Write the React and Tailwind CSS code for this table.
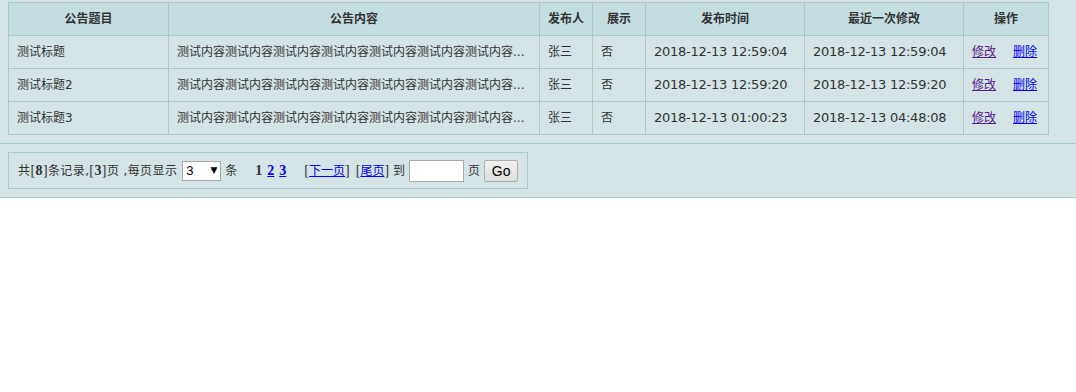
import React from "react";

const rows = [
  { title: "测试标题", pub: "2018-12-13 12:59:04", mod: "2018-12-13 12:59:04" },
  { title: "测试标题2", pub: "2018-12-13 12:59:20", mod: "2018-12-13 12:59:20" },
  { title: "测试标题3", pub: "2018-12-13 01:00:23", mod: "2018-12-13 04:48:08" },
];

const content = "测试内容".repeat(7) + "...";

const cols = [
  { name: "公告题目", w: "w-[160px]" },
  { name: "公告内容", w: "w-[371px]" },
  { name: "发布人", w: "w-[53px]" },
  { name: "展示", w: "w-[53px]" },
  { name: "发布时间", w: "w-[159px]" },
  { name: "最近一次修改", w: "w-[159px]" },
  { name: "操作", w: "w-[85px]" },
];

const td = "border border-[#a9c9cb] h-[33px] pl-[8px] pr-[4px] whitespace-nowrap overflow-hidden";
const serif = { fontFamily: "'Liberation Serif', serif" };

export default function App() {
  return (
    <div
      className="w-full min-h-[392px] bg-white text-[12px] text-[#333]"
      style={{ fontFamily: "'DejaVu Sans', 'Noto Sans CJK SC', sans-serif" }}
    >
      <div className="bg-[#d3e3e6]">
        {/* list */}
        <div className="pt-[2px] pl-[8px] pb-[8px]">
          <table className="table-fixed border-collapse w-[1040px]">
            <thead>
              <tr className="bg-[#c4dde1]">
                {cols.map((c) => (
                  <th key={c.name} className={`${c.w} border border-[#a9c9cb] h-[33px] font-bold text-center`}>
                    {c.name}
                  </th>
                ))}
              </tr>
            </thead>
            <tbody>
              {rows.map((r) => (
                <tr key={r.title}>
                  <td className={td}>{r.title}</td>
                  <td className={td}>{content}</td>
                  <td className={td}>张三</td>
                  <td className={td}>否</td>
                  <td className={`${td} text-[13px] tracking-[-0.25px]`}>{r.pub}</td>
                  <td className={`${td} text-[13px] tracking-[-0.25px]`}>{r.mod}</td>
                  <td className={td}>
                    <a className="underline text-[#551a8b] cursor-pointer">修改</a>
                    <a className="underline text-[#0000ee] cursor-pointer ml-[17px]">删除</a>
                  </td>
                </tr>
              ))}
            </tbody>
          </table>
        </div>

        {/* pager */}
        <div className="border-t border-b border-[#a9c9cb] p-[8px]">
          <div className="inline-flex items-center h-[37px] w-[520px] border border-[#a9c9cb] pl-[9px]">
            <span className="tracking-[0.4px]">
              共<span style={serif} className="text-[14px]">[<b>8</b>]</span>条记录,
              <span style={serif} className="text-[14px]">[<b>3</b>]</span>页 ,每页显示
            </span>
            <div className="ml-[5px] w-[39px] h-[20px] bg-white border border-[#a9a9a9] flex items-center justify-between px-[3px] text-[13px] text-black">
              <span style={{ fontFamily: "'Liberation Sans', sans-serif" }}>3</span>
              <span className="text-[9px]">▼</span>
            </div>
            <span className="ml-[4px]">条</span>
            <span className="ml-[18px] font-bold text-[14px] flex gap-[5px]" style={serif}>
              <span>1</span>
              <a className="text-[#0000ee] underline cursor-pointer">2</a>
              <a className="text-[#0000ee] underline cursor-pointer">3</a>
            </span>
            <span className="ml-[18px]">
              <span style={serif} className="text-[14px]">[</span>
              <a className="text-[#0000ee] underline cursor-pointer">下一页</a>
              <span style={serif} className="text-[14px]">]</span>
            </span>
            <span className="ml-[6px]">
              <span style={serif} className="text-[14px]">[</span>
              <a className="text-[#0000ee] underline cursor-pointer">尾页</a>
              <span style={serif} className="text-[14px]">]</span>
            </span>
            <span className="ml-[4px]">到</span>
            <div className="ml-[4px] w-[55px] h-[22px] bg-white border border-[#a9a9a9]" />
            <span className="ml-[4px]">页</span>
            <button
              className="ml-[4px] w-[34px] h-[22px] border border-[#adadad] rounded-[2px] bg-[linear-gradient(#f2f2f2,#dcdcdc)] text-[14px] text-black"
              style={{ fontFamily: "'Liberation Sans', sans-serif" }}
            >
              Go
            </button>
          </div>
        </div>
      </div>
    </div>
  );
}
